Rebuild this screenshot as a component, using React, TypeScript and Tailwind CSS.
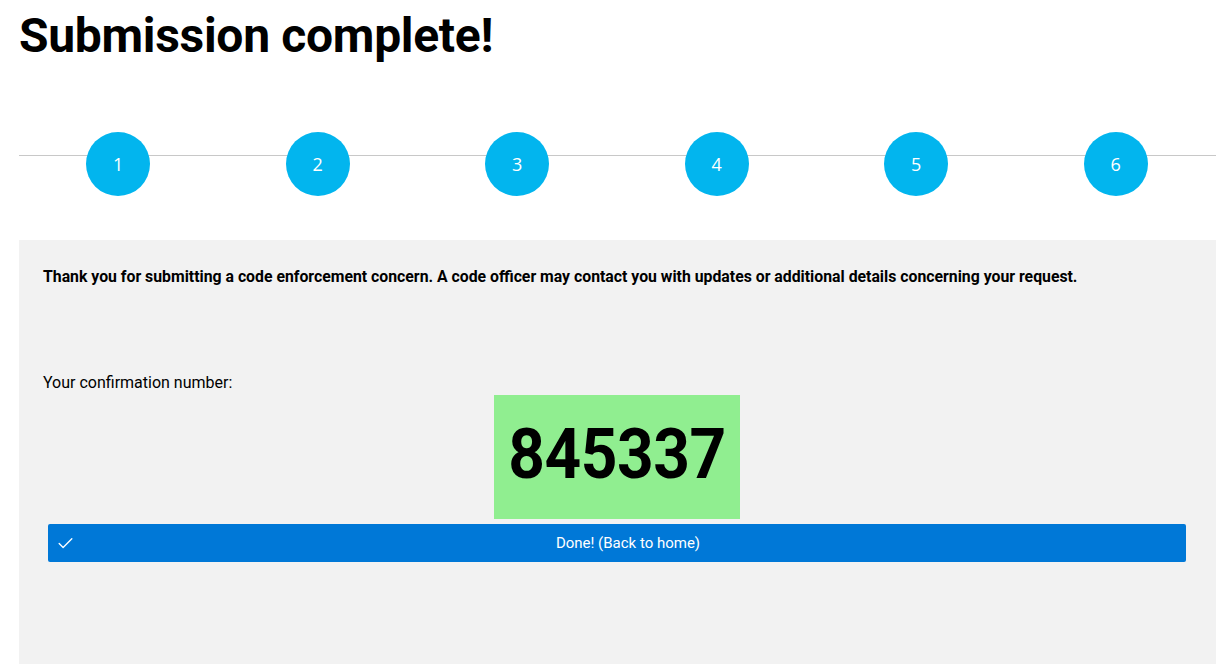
import React from 'react';
import { Check } from 'lucide-react';

const steps = [1, 2, 3, 4, 5, 6];

export default function App() {
    return (
        <div className="min-h-screen bg-white pl-[19px] pr-[6px] font-['Roboto',sans-serif] text-black">
            <h1 className="pt-[8px] text-[48px] font-bold leading-[56px] tracking-[-0.3px]">Submission complete!</h1>

            {/* Stepper */}
            <div className="relative mt-[68px] h-[64px]">
                <div className="absolute left-0 right-0 top-[23px] h-px bg-[#c8c8c8]" />
                <div className="relative grid grid-cols-6">
                    {steps.map(n => (
                        <div key={n} className="flex justify-center">
                            <div className="-ml-[1px] flex h-[64px] w-[64px] items-center justify-center rounded-full bg-[#02b5ee] font-['Open_Sans',sans-serif] text-[18px] text-white">
                                {n}
                            </div>
                        </div>
                    ))}
                </div>
            </div>

            {/* Result panel */}
            <div className="mt-[44px] min-h-[430px] bg-[#f2f2f2] px-[24px] pt-[27px] pb-[40px]">
                <p className="text-[15.8px] font-bold leading-[20px]">
                    Thank you for submitting a code enforcement concern. A code officer may contact you with updates or additional details concerning your request.
                </p>
                <p className="mt-[86px] text-[16px] leading-[20px]">Your confirmation number:</p>
                <div className="mt-[2px] flex justify-center">
                    <div className="-ml-[1px] flex h-[124px] w-[246px] items-center justify-center bg-[#90ee90] pb-[4px]">
                        <span className="inline-block scale-y-110 text-[64px] font-bold leading-none tracking-[-0.5px]">845337</span>
                    </div>
                </div>
                <button className="mt-[5px] ml-[5px] mr-[6px] flex h-[38px] w-[calc(100%-11px)] items-center rounded-[2px] bg-[#0078d7] pl-[8px] pr-[5px] text-[15px] text-white">
                    <Check size={19} strokeWidth={1.7} />
                    <span className="flex-1 text-center">Done! (Back to home)</span>
                </button>
            </div>
        </div>
    );
}
